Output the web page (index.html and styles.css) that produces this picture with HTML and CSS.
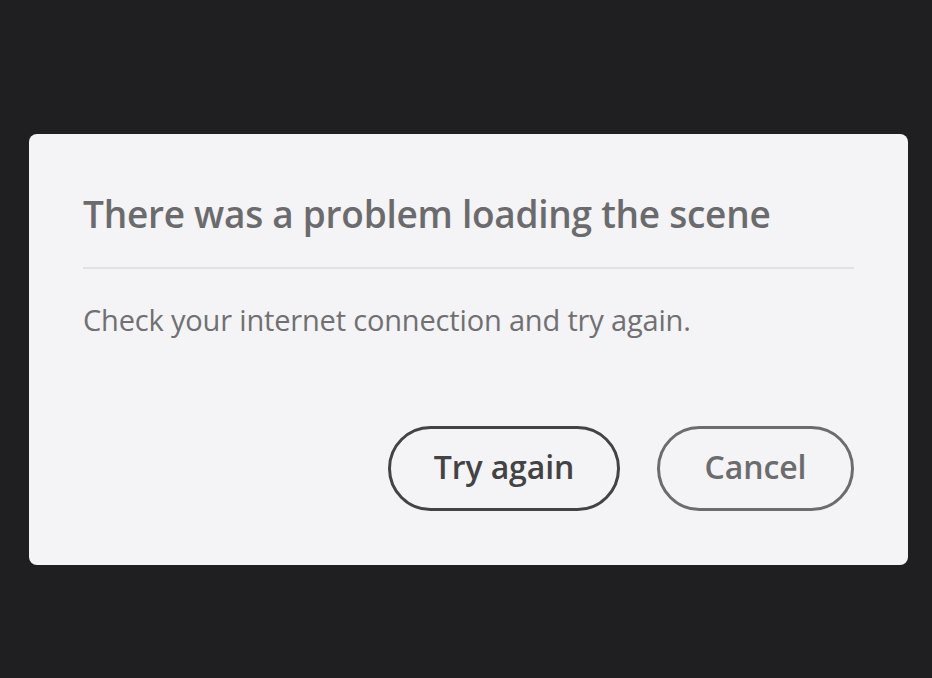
FILE: index.html
```html
<!DOCTYPE html>
<html>
<head>
<meta charset="utf-8">
<link rel="stylesheet" href="styles.css">
</head>
<body>
<div class="stage">
  <div class="dialog">
    <h1 class="title">There was a problem loading the scene</h1>
    <div class="divider"></div>
    <p class="body">Check your internet connection and try again.</p>
    <div class="actions">
      <button class="btn btn-primary">Try again</button>
      <button class="btn btn-secondary">Cancel</button>
    </div>
  </div>
</div>
</body>
</html>
```
FILE: styles.css
```css
html, body {
  margin: 0;
  padding: 0;
  background: #1f1e21;
  width: 932px;
  height: 678px;
  overflow: hidden;
}
.stage {
  padding: 134px 24px 0 29px;
}
.dialog {
  width: 879px;
  height: 431px;
  box-sizing: border-box;
  background: #f4f3f6;
  border-radius: 8px;
  padding: 0 54px 0 54px;
  display: flex;
  flex-direction: column;
  font-family: "Open Sans", "Noto Sans", sans-serif;
}
.title {
  margin: 55px 0 0 0;
  font-size: 37px;
  font-weight: 600;
  color: #6b6b6d;
  line-height: 50px;
  letter-spacing: -0.26px;
}
.divider {
  height: 2px;
  background: #e2e1e4;
  margin-top: 28px;
}
.body {
  margin: 31px 0 0 0;
  font-size: 29px;
  line-height: 40px;
  color: #707072;
  letter-spacing: -0.17px;
}
.actions {
  display: flex;
  justify-content: flex-end;
  gap: 37px;
  margin-top: 86px;
}
.btn {
  height: 85px;
  border-radius: 43px;
  background: transparent;
  font-family: "Open Sans", "Noto Sans", sans-serif;
  font-size: 32px;
  font-weight: 600;
  padding: 0 0 4px 0;
  box-sizing: border-box;
  letter-spacing: -0.1px;
}
.btn-primary {
  width: 232px;
  border: 3px solid #434244;
  color: #434244;
}
.btn-secondary {
  width: 197px;
  border: 3px solid #6c6b6e;
  color: #6c6b6e;
}
```
